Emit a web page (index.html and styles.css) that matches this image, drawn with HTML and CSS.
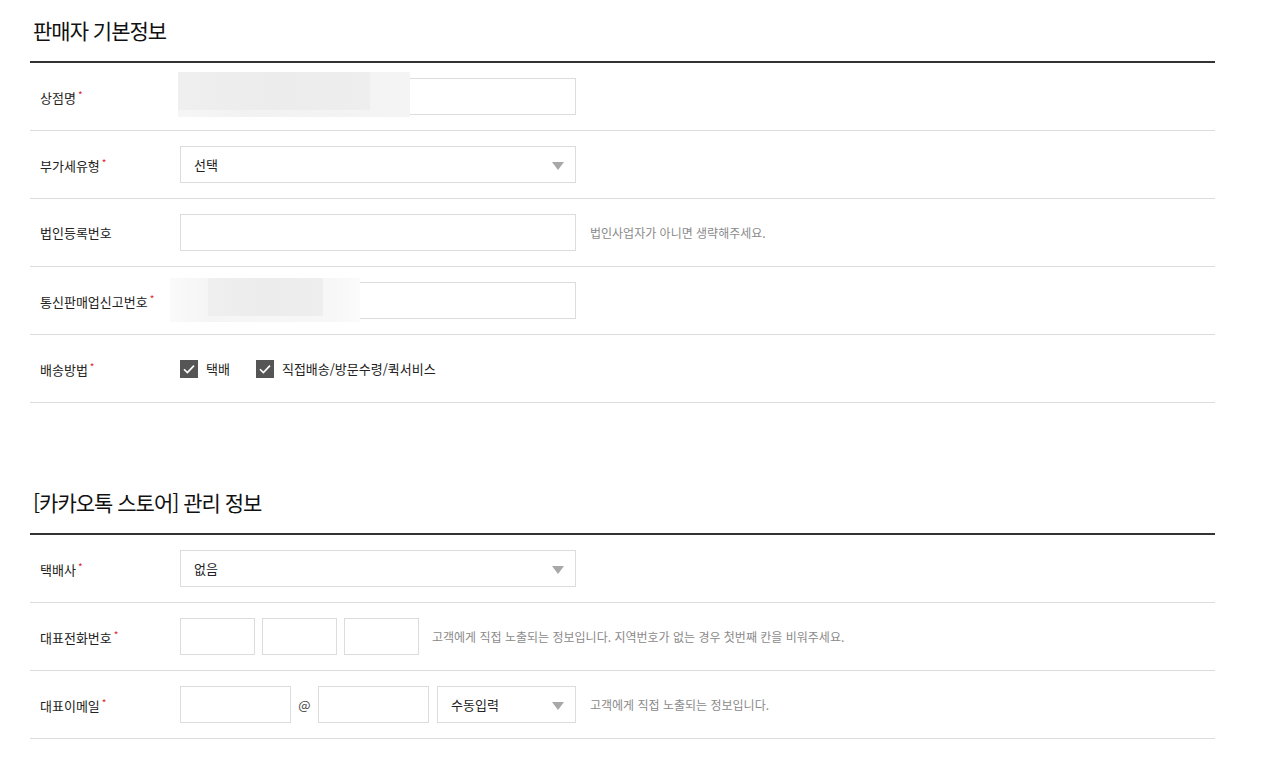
FILE: index.html
```html
<!DOCTYPE html>
<html lang="ko">
<head>
    <meta charset="UTF-8"/>
    <title>판매자 정보</title>
    <link rel="stylesheet" href="styles.css">
</head>
<body>
<div class="page">

    <!-- ========== 판매자 기본정보 ========== -->
    <div class="section">
        <h2 class="section-title">판매자 기본정보</h2>

        <div class="row">
            <div class="label">상점명<span class="req">*</span></div>
            <div class="field">
                <div class="input-wrap">
                    <input type="text" class="input w-main"/>
                    <div class="blur blur-shop"><span class="blur-dark"></span></div>
                </div>
            </div>
        </div>

        <div class="row">
            <div class="label">부가세유형<span class="req">*</span></div>
            <div class="field">
                <div class="select w-main">선택<span class="arrow"></span></div>
            </div>
        </div>

        <div class="row">
            <div class="label">법인등록번호</div>
            <div class="field">
                <input type="text" class="input w-main"/>
                <span class="help">법인사업자가 아니면 생략해주세요.</span>
            </div>
        </div>

        <div class="row">
            <div class="label">통신판매업신고번호<span class="req">*</span></div>
            <div class="field">
                <div class="input-wrap">
                    <input type="text" class="input w-main"/>
                    <div class="blur blur-biz"><span class="blur-dark"></span></div>
                </div>
            </div>
        </div>

        <div class="row">
            <div class="label">배송방법<span class="req">*</span></div>
            <div class="field">
                <label class="check">
                    <span class="box">
                        <svg width="14" height="14" viewBox="0 0 14 14"><path d="M2 7.2 L5.4 10.6 L12 3.6" fill="none" stroke="#fff" stroke-width="1.6"/></svg>
                    </span>
                    택배
                </label>
                <label class="check">
                    <span class="box">
                        <svg width="14" height="14" viewBox="0 0 14 14"><path d="M2 7.2 L5.4 10.6 L12 3.6" fill="none" stroke="#fff" stroke-width="1.6"/></svg>
                    </span>
                    직접배송/방문수령/퀵서비스
                </label>
            </div>
        </div>
    </div>

    <!-- ========== 카카오톡 스토어 관리 정보 ========== -->
    <div class="section second">
        <h2 class="section-title">[카카오톡 스토어] 관리 정보</h2>

        <div class="row">
            <div class="label">택배사<span class="req">*</span></div>
            <div class="field">
                <div class="select w-main">없음<span class="arrow"></span></div>
            </div>
        </div>

        <div class="row">
            <div class="label">대표전화번호<span class="req">*</span></div>
            <div class="field phone">
                <input type="text" class="input w-phone"/>
                <input type="text" class="input w-phone"/>
                <input type="text" class="input w-phone"/>
                <span class="help">고객에게 직접 노출되는 정보입니다. 지역번호가 없는 경우 첫번째 칸을 비워주세요.</span>
            </div>
        </div>

        <div class="row">
            <div class="label">대표이메일<span class="req">*</span></div>
            <div class="field">
                <input type="text" class="input w-mail"/>
                <span class="at">@</span>
                <input type="text" class="input w-mail"/>
                <div class="select w-domain">수동입력<span class="arrow"></span></div>
                <span class="help">고객에게 직접 노출되는 정보입니다.</span>
            </div>
        </div>
    </div>

</div>
</body>
</html>
```

FILE: styles.css
```css
/* ========== GLOBAL ========== */
body {
  margin: 0;
  padding: 0;
  background-color: #ffffff;
  color: #222222;
  font-family: "Noto Sans CJK KR", "Noto Sans", sans-serif;
}

.page {
  width: 1185px;
  padding-left: 30px;
}

/* ========== SECTIONS ========== */
.section-title {
  margin: 0;
  height: 63px;
  padding-left: 3px;
  box-sizing: border-box;
  padding-top: 17px;
  font-size: 21px;
  line-height: 26px;
  font-weight: normal;
  letter-spacing: -1px;
  color: #111;
  border-bottom: 2px solid #333;
}

.section.second {
  margin-top: 69px;
}

/* ========== ROWS ========== */
.row {
  display: flex;
  align-items: center;
  height: 68px;
  border-bottom: 1px solid #dddddd;
  box-sizing: border-box;
}

.label {
  width: 150px;
  padding-left: 10px;
  box-sizing: border-box;
  font-size: 13px;
  letter-spacing: 0;
  color: #222;
}

.req {
  color: #e0262f;
  font-size: 10px;
  vertical-align: 4px;
  margin-left: 2px;
}

.field {
  display: flex;
  align-items: center;
}

/* ========== INPUTS ========== */
.input {
  height: 37px;
  box-sizing: border-box;
  border: 1px solid #dcdcdc;
  background: #fff;
  margin: 0;
  padding: 0 12px;
  font-family: inherit;
  font-size: 13px;
}

.w-main { width: 396px; }
.w-phone { width: 75px; margin-right: 7px; }
.w-mail { width: 111px; }
.w-domain { width: 139px; margin-left: 8px; }

.phone .help { margin-left: 6px; }

.select {
  position: relative;
  height: 37px;
  box-sizing: border-box;
  border: 1px solid #dcdcdc;
  padding-left: 13px;
  display: flex;
  align-items: center;
  font-size: 13px;
  color: #222;
}

/* select triangle */
.arrow {
  position: absolute;
  right: 11px;
  top: 15px;
  width: 0;
  height: 0;
  border-left: 6px solid transparent;
  border-right: 6px solid transparent;
  border-top: 8px solid #a8a8a8;
}

.help {
  margin-left: 14px;
  font-size: 12px;
  color: #8a8a8a;
  letter-spacing: 0;
}

.at {
  width: 27px;
  text-align: center;
  font-size: 13px;
  color: #444;
}

/* ========== BLURRED PATCHES ========== */
.input-wrap {
  position: relative;
}

.blur {
  position: absolute;
  background: linear-gradient(to right, #f6f6f6, #f2f2f2 30%, #f4f4f4);
  pointer-events: none;
}

.blur-dark {
  position: absolute;
  top: 0;
  bottom: 8px;
  background: linear-gradient(to right, #efefef, #ececec 50%, #eeeeee);
}

.blur-shop {
  left: -2px;
  top: -6px;
  width: 232px;
  height: 45px;
}
.blur-shop .blur-dark {
  left: 0;
  width: 192px;
  bottom: 7px;
}

.blur-biz {
  left: -10px;
  top: -4px;
  width: 190px;
  height: 44px;
  background: linear-gradient(to right, #fafafa, #f5f5f5 20%, #f7f7f7 85%, #fbfbfb);
}
.blur-biz .blur-dark {
  left: 38px;
  width: 115px;
  bottom: 6px;
}

/* ========== CHECKBOXES ========== */
.check {
  display: flex;
  align-items: center;
  font-size: 13px;
  color: #222;
  margin-right: 26px;
}

.check .box {
  width: 18px;
  height: 18px;
  background: #555555;
  display: flex;
  align-items: center;
  justify-content: center;
  margin-right: 8px;
}
```
